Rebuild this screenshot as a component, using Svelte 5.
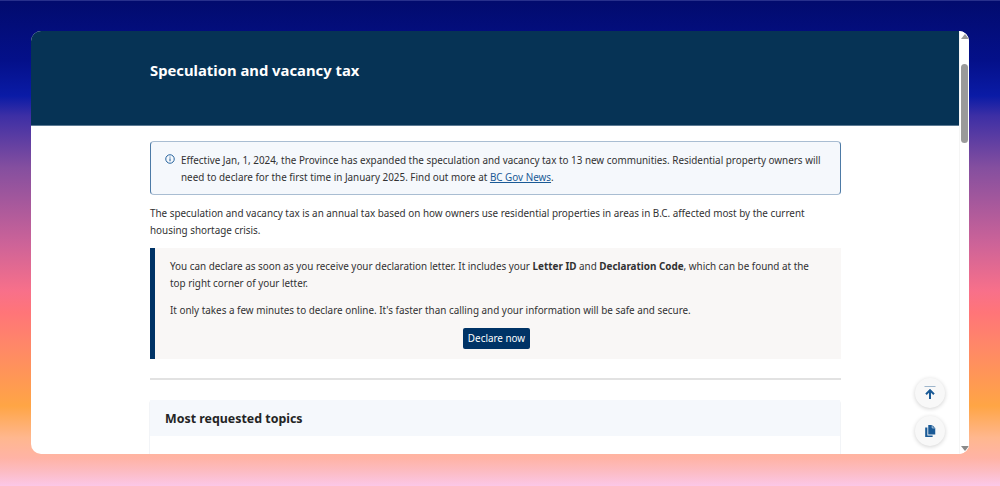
<script lang="ts">
  const title = 'Speculation and vacancy tax';
</script>

<div class="backdrop">
  <div class="window">
    <div class="page">
      <header class="banner">
        <h1>{title}</h1>
      </header>
      <main class="content">
        <div class="alert">
          <svg class="info" viewBox="0 0 16 16" width="10" height="10" aria-hidden="true">
            <circle cx="8" cy="8" r="6.8" fill="none" stroke="#1a5a96" stroke-width="1.5" />
            <path d="M8 7v4.6M8 4.2v1.5" fill="none" stroke="#1a5a96" stroke-width="1.6" />
          </svg>
          <p>
            Effective Jan, 1, 2024, the Province has expanded the speculation and vacancy tax to 13 new communities. Residential property owners will need to declare for the first time in January 2025. Find out more at <a href="#news">BC Gov News</a>.
          </p>
        </div>
        <p class="intro">
          The speculation and vacancy tax is an annual tax based on how owners use residential properties in areas in B.C. affected most by the current housing shortage crisis.
        </p>
        <section class="callout">
          <p>
            You can declare as soon as you receive your declaration letter. It includes your <b>Letter ID</b> and <b>Declaration Code</b>, which can be found at the top right corner of your letter.
          </p>
          <p>It only takes a few minutes to declare online. It's faster than calling and your information will be safe and secure.</p>
          <div class="action"><button type="button">Declare now</button></div>
        </section>
        <hr />
        <section class="card">
          <h2>Most requested topics</h2>
          <div class="card-body">
            <a href="#topics">Learn if you need to declare and how the tax applies to your residential property</a>
          </div>
        </section>
      </main>
    </div>
    <div class="scrollbar">
      <span class="arrow up"></span>
      <span class="thumb"></span>
      <span class="arrow down"></span>
    </div>
    <div class="floating">
      <button type="button" class="round" aria-label="Back to top">
        <svg viewBox="0 0 16 16" width="16" height="16" aria-hidden="true">
          <path d="M2.5 1.5h11" stroke="#9fb6cc" stroke-width="1" fill="none" />
          <path d="M8 14V6.5M4 9.2 8 5.2l4 4" stroke="#1a5a96" stroke-width="2" fill="none" />
        </svg>
      </button>
      <button type="button" class="round" aria-label="Copy">
        <svg viewBox="0 0 16 16" width="14" height="14" aria-hidden="true">
          <path d="M6 1h4.5L14 4.5V12H6z" fill="#1a5a96" />
          <path d="M10.5 1v3.5H14" fill="none" stroke="#fff" stroke-width=".7" />
          <path d="M2.5 4H5v9h6v1.8H2.5z" fill="#1a5a96" />
        </svg>
      </button>
    </div>
  </div>
</div>

<style>
  :global(body) {
    margin: 0;
    font-family: 'Noto Sans', sans-serif;
  }

  .backdrop {
    box-sizing: border-box;
    height: 486px;
    padding: 30px 31px 31px;
    overflow: hidden;
    border-top: 1px solid #28308c;
    background: linear-gradient(
      180deg,
      #020b6e 0,
      #04108a 60px,
      #0a1ba6 95px,
      #3d2fa5 115px,
      #854f9f 167px,
      #cd6398 243px,
      #f8708a 290px,
      #ff7578 312px,
      #ff8a65 350px,
      #ffa545 405px,
      #ffb78f 437px,
      #ffb3a5 457px,
      #fcbcc4 471px,
      #fbc8ea 486px
    );
  }

  .window {
    position: relative;
    display: flex;
    height: 423px;
    overflow: hidden;
    border-radius: 10px;
    background: #fff;
  }

  .page {
    flex: 1;
    min-width: 0;
    overflow: hidden;
  }

  .banner {
    box-sizing: border-box;
    height: 95px;
    padding: 29px 119px 0;
    background: #063355;
    border-bottom: 1px solid #5c7a93;
  }

  h1 {
    margin: 0;
    font-size: 14.8px;
    line-height: 20px;
    font-weight: 700;
    color: #fff;
  }

  .content {
    width: 691px;
    margin-left: 119px;
    padding-top: 15px;
    font-size: 9.88px;
    line-height: 16.5px;
    color: #313132;
  }

  p {
    margin: 0;
  }

  .alert {
    box-sizing: border-box;
    display: flex;
    gap: 6px;
    height: 54px;
    padding: 10px 15px 0 14px;
    border: 1px solid #a9bdd2;
    border-left-color: #4d7aa6;
    border-right-color: #4d7aa6;
    border-radius: 4px;
    background: #f5f8fc;
  }

  .info {
    flex: none;
    margin-top: 2px;
  }

  a {
    color: #1a5a96;
  }

  .intro {
    margin-top: 10px;
  }

  .callout {
    box-sizing: border-box;
    height: 111px;
    margin-top: 10px;
    padding: 10px 18px 0 15px;
    border-left: 5px solid #003366;
    background: #f9f7f6;
  }

  .callout p + p {
    margin-top: 10.5px;
  }

  .action {
    display: flex;
    justify-content: center;
    margin-top: 10px;
  }

  .action button {
    height: 21px;
    width: 67px;
    padding: 0;
    border: 0;
    border-radius: 2px;
    background: #003366;
    color: #fff;
    font: inherit;
    line-height: 21px;
  }

  hr {
    height: 2px;
    margin: 19px 0 20px;
    border: 0;
    background: #e2e2e2;
  }

  .card {
    margin-left: -1px;
    border: 1px solid #f2f4f7;
    border-top: 0;
    border-radius: 4px 4px 0 0;
  }

  h2 {
    margin: 0;
    padding: 10px 15px 8px;
    height: 18px;
    font-size: 12.4px;
    line-height: 18px;
    font-weight: 700;
    color: #242424;
    background: #f5f8fc;
  }

  .card-body {
    padding: 14px 15px;
    text-align: center;
  }

  .card-body a {
    text-decoration: none;
    color: #313132;
  }

  .scrollbar {
    flex: none;
    position: relative;
    display: flex;
    flex-direction: column;
    align-items: center;
    justify-content: space-between;
    width: 9px;
    background: #fff;
    border-left: 1px solid #f5f5f5;
  }

  .thumb {
    position: absolute;
    top: 33px;
    width: 7px;
    height: 79px;
    border-radius: 4px;
    background: #9a9a9a;
  }

  .arrow {
    width: 0;
    height: 0;
    margin: 3px 0;
    border-left: 4px solid transparent;
    border-right: 4px solid transparent;
  }

  .arrow.up {
    border-bottom: 5px solid #9a9a9a;
  }

  .arrow.down {
    border-top: 5px solid #8a8a8a;
  }

  .floating {
    position: absolute;
    right: 24px;
    bottom: 8px;
    display: flex;
    flex-direction: column;
    gap: 8px;
  }

  .round {
    display: flex;
    align-items: center;
    justify-content: center;
    width: 30px;
    height: 30px;
    padding: 0;
    border: 0;
    border-radius: 50%;
    background: #f8f8f8;
    box-shadow: 0 1px 4px rgba(0, 0, 0, 0.18);
  }
</style>
